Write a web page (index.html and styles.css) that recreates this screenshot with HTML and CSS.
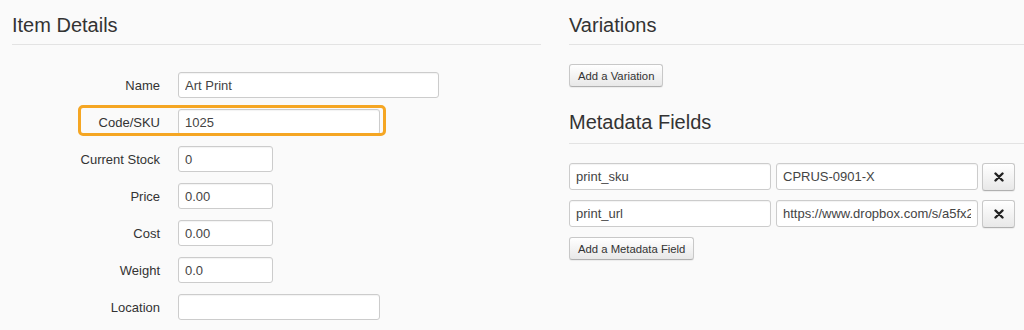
FILE: index.html
```html
<!DOCTYPE html>
<html lang="en">
<head>
  <meta charset="UTF-8">
  <meta name="viewport" content="width=device-width, initial-scale=1.0">
  <title>Item Details</title>
  <link rel="stylesheet" href="styles.css">
</head>
<body>
  <div class="page">
    <div class="column">
      <h2 class="section-title">Item Details</h2>
      <form class="item-form">
        <div class="form-row">
          <label for="name">Name</label>
          <input type="text" id="name" class="input input-wide" value="Art Print">
        </div>
        <div class="form-row highlighted">
          <label for="sku">Code/SKU</label>
          <input type="text" id="sku" class="input input-medium" value="1025">
        </div>
        <div class="form-row">
          <label for="stock">Current Stock</label>
          <input type="text" id="stock" class="input input-small" value="0">
        </div>
        <div class="form-row">
          <label for="price">Price</label>
          <input type="text" id="price" class="input input-small" value="0.00">
        </div>
        <div class="form-row">
          <label for="cost">Cost</label>
          <input type="text" id="cost" class="input input-small" value="0.00">
        </div>
        <div class="form-row">
          <label for="weight">Weight</label>
          <input type="text" id="weight" class="input input-small" value="0.0">
        </div>
        <div class="form-row">
          <label for="location">Location</label>
          <input type="text" id="location" class="input input-medium" value="">
        </div>
      </form>
    </div>

    <div class="column">
      <h2 class="section-title">Variations</h2>
      <div class="section-body">
        <button type="button" class="btn">Add a Variation</button>
      </div>

      <h2 class="section-title second">Metadata Fields</h2>
      <div class="section-body meta-list">
        <div class="meta-row">
          <input type="text" class="input" value="print_sku">
          <input type="text" class="input" value="CPRUS-0901-X">
          <button type="button" class="btn btn-remove" aria-label="Remove">
            <svg width="10" height="10" viewBox="0 0 10 10"><path d="M1.5 1.5L8.5 8.5M8.5 1.5L1.5 8.5" stroke="#222" stroke-width="2.4" stroke-linecap="round"/></svg>
          </button>
        </div>
        <div class="meta-row">
          <input type="text" class="input" value="print_url">
          <input type="text" class="input" value="https://www.dropbox.com/s/a5fx2k9q/print.jpg">
          <button type="button" class="btn btn-remove" aria-label="Remove">
            <svg width="10" height="10" viewBox="0 0 10 10"><path d="M1.5 1.5L8.5 8.5M8.5 1.5L1.5 8.5" stroke="#222" stroke-width="2.4" stroke-linecap="round"/></svg>
          </button>
        </div>
        <div>
          <button type="button" class="btn">Add a Metadata Field</button>
        </div>
      </div>
    </div>
  </div>
</body>
</html>
```

FILE: styles.css
```css
body {
  margin: 0;
  background-color: #fafafa;
  font-family: "Liberation Sans", Arial, sans-serif;
  color: #333;
  overflow: hidden;
}
.page {
  display: grid;
  grid-template-columns: 529px 455px;
  column-gap: 28px;
  padding-left: 12px;
}
.section-title {
  margin: 13px 0 0;
  padding-bottom: 7px;
  border-bottom: 1px solid #e3e3e3;
  font-size: 20px;
  font-weight: normal;
  line-height: 24px;
  color: #333;
}
.section-title.second {
  margin-top: 23px;
  padding-bottom: 9px;
}
.section-body {
  padding-top: 19px;
}
.item-form {
  display: flex;
  flex-direction: column;
  gap: 11px;
  padding-top: 27px;
}
.form-row {
  position: relative;
  display: grid;
  grid-template-columns: 148px auto;
  column-gap: 18px;
  align-items: center;
  justify-items: start;
}
.form-row label {
  justify-self: end;
  font-size: 13px;
  color: #333;
}
.form-row.highlighted::before {
  content: "";
  position: absolute;
  left: 66px;
  top: -4px;
  width: 302px;
  height: 25px;
  border: 3px solid #f5a623;
  border-radius: 5px;
}
.input {
  box-sizing: border-box;
  height: 26px;
  padding: 0 6px;
  border: 1px solid #ccc;
  border-radius: 3px;
  background-color: #fff;
  box-shadow: inset 0 1px 1px rgba(0, 0, 0, 0.05);
  font-family: inherit;
  font-size: 13px;
  color: #444;
}
.input-wide {
  width: 261px;
}
.input-medium {
  width: 202px;
}
.input-small {
  width: 95px;
}
.btn {
  box-sizing: border-box;
  height: 23px;
  padding: 0 8px;
  border: 1px solid #c8c8c8;
  border-bottom-color: #b0b0b0;
  border-radius: 3px;
  background: linear-gradient(#ffffff, #e8e8e8);
  box-shadow: 0 1px 1px rgba(0, 0, 0, 0.06);
  font-family: inherit;
  font-size: 11.3px;
  color: #333;
  cursor: pointer;
}
.meta-list {
  display: flex;
  flex-direction: column;
  gap: 9px;
}
.meta-row {
  display: grid;
  grid-template-columns: 202px 202px 32px;
  column-gap: 5px;
  align-items: stretch;
}
.meta-row .input {
  height: 27px;
}
.meta-row .btn-remove {
  height: 28px;
  margin-left: -1px;
  padding: 0;
  display: flex;
  align-items: center;
  justify-content: center;
}
```
